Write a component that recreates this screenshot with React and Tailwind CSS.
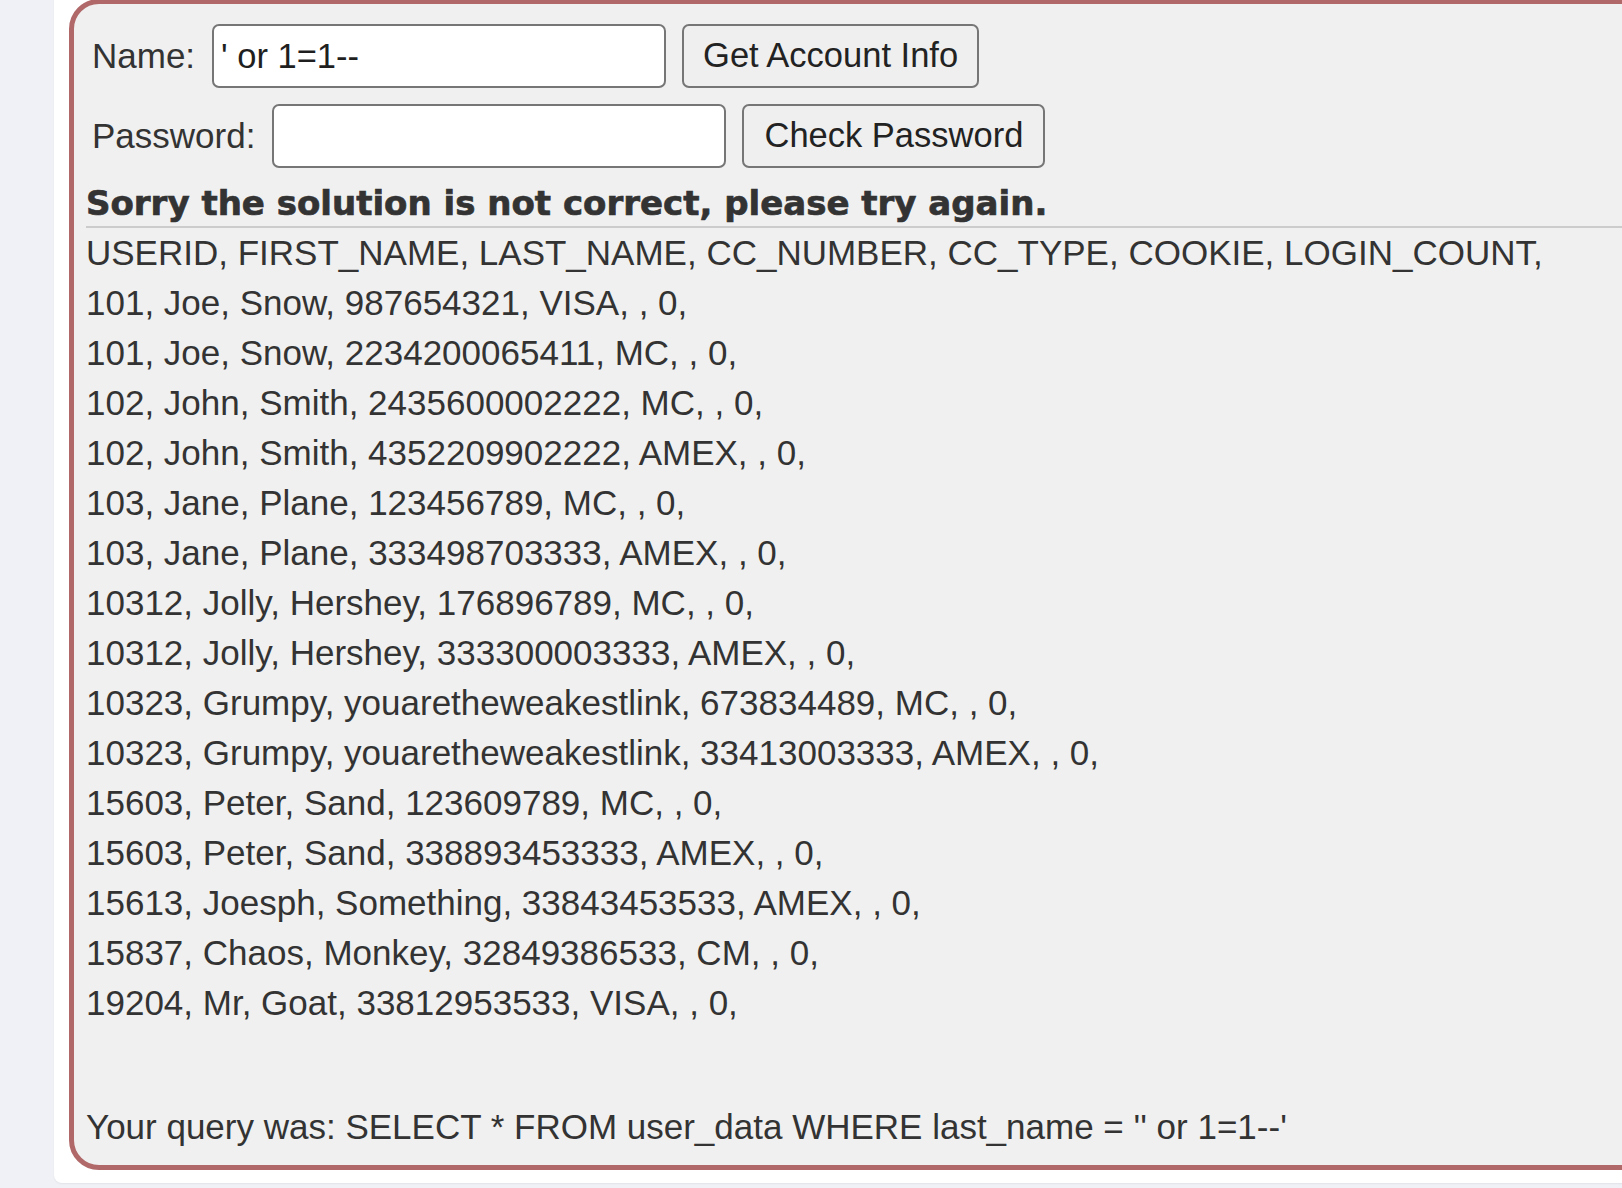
const rows = [
  'USERID, FIRST_NAME, LAST_NAME, CC_NUMBER, CC_TYPE, COOKIE, LOGIN_COUNT,',
  '101, Joe, Snow, 987654321, VISA, , 0,',
  '101, Joe, Snow, 2234200065411, MC, , 0,',
  '102, John, Smith, 2435600002222, MC, , 0,',
  '102, John, Smith, 4352209902222, AMEX, , 0,',
  '103, Jane, Plane, 123456789, MC, , 0,',
  '103, Jane, Plane, 333498703333, AMEX, , 0,',
  '10312, Jolly, Hershey, 176896789, MC, , 0,',
  '10312, Jolly, Hershey, 333300003333, AMEX, , 0,',
  '10323, Grumpy, youaretheweakestlink, 673834489, MC, , 0,',
  '10323, Grumpy, youaretheweakestlink, 33413003333, AMEX, , 0,',
  '15603, Peter, Sand, 123609789, MC, , 0,',
  '15603, Peter, Sand, 338893453333, AMEX, , 0,',
  '15613, Joesph, Something, 33843453533, AMEX, , 0,',
  '15837, Chaos, Monkey, 32849386533, CM, , 0,',
  '19204, Mr, Goat, 33812953533, VISA, , 0,',
]

const FormRow = ({ label, value, button, buttonWidth }) => (
  <div className="flex items-center">
    <span className="text-[35px] leading-[50px]">{label}</span>
    <input
      type="text"
      defaultValue={value}
      readOnly
      className="ml-[17px] h-[64px] w-[454px] rounded-[7px] border-2 border-[#767676] bg-white px-[7px] text-[34.5px] text-[#1f1f1f] outline-none font-['Liberation_Sans',Arial,sans-serif]"
    />
    <button
      className={`ml-[16px] h-[64px] ${buttonWidth} rounded-[7px] border-2 border-[#767676] bg-[#efefef] text-center text-[34.5px] text-[#222] font-['Liberation_Sans',Arial,sans-serif]`}
    >
      {button}
    </button>
  </div>
)

export default function App() {
  return (
    <div className="h-[1188px] overflow-hidden bg-[#eff1f6] pl-[54px] text-[#333] font-['Liberation_Sans',Arial,sans-serif]">
      <div className="w-[1700px] rounded-bl-[8px] bg-white pl-[15px] pb-[13px] shadow-[0_1px_2px_rgba(0,0,0,0.06)]">
        <div className="-mt-px w-[1680px] rounded-[30px] border-[5px] border-[#b06868] bg-[#f0f0f0] px-[12px] pt-[20px] pb-[13px]">
          {/* login form */}
          <div className="flex flex-col gap-[16px] pl-[6px]">
            <FormRow label="Name:" value="' or 1=1--" button="Get Account Info" buttonWidth="w-[297px]" />
            <FormRow label="Password:" value="" button="Check Password" buttonWidth="w-[303px]" />
          </div>

          <h4 className="mt-[15px] text-[34px] font-bold leading-[40px] font-['DejaVu_Sans',Verdana,sans-serif] [-webkit-text-stroke:0.7px_#333]">
            Sorry the solution is not correct, please try again.
          </h4>
          <div className="mt-[3px] h-[2px] bg-[#cccccc]" />

          {/* results */}
          <div className="text-[35px] leading-[50px]">
            {rows.map((r, i) => (
              <div key={i}>{r}</div>
            ))}
          </div>

          <p className="mt-[74px] text-[35px] leading-[50px]">
            Your query was: SELECT * FROM user_data WHERE last_name = '' or 1=1--'
          </p>
        </div>
      </div>
    </div>
  )
}
